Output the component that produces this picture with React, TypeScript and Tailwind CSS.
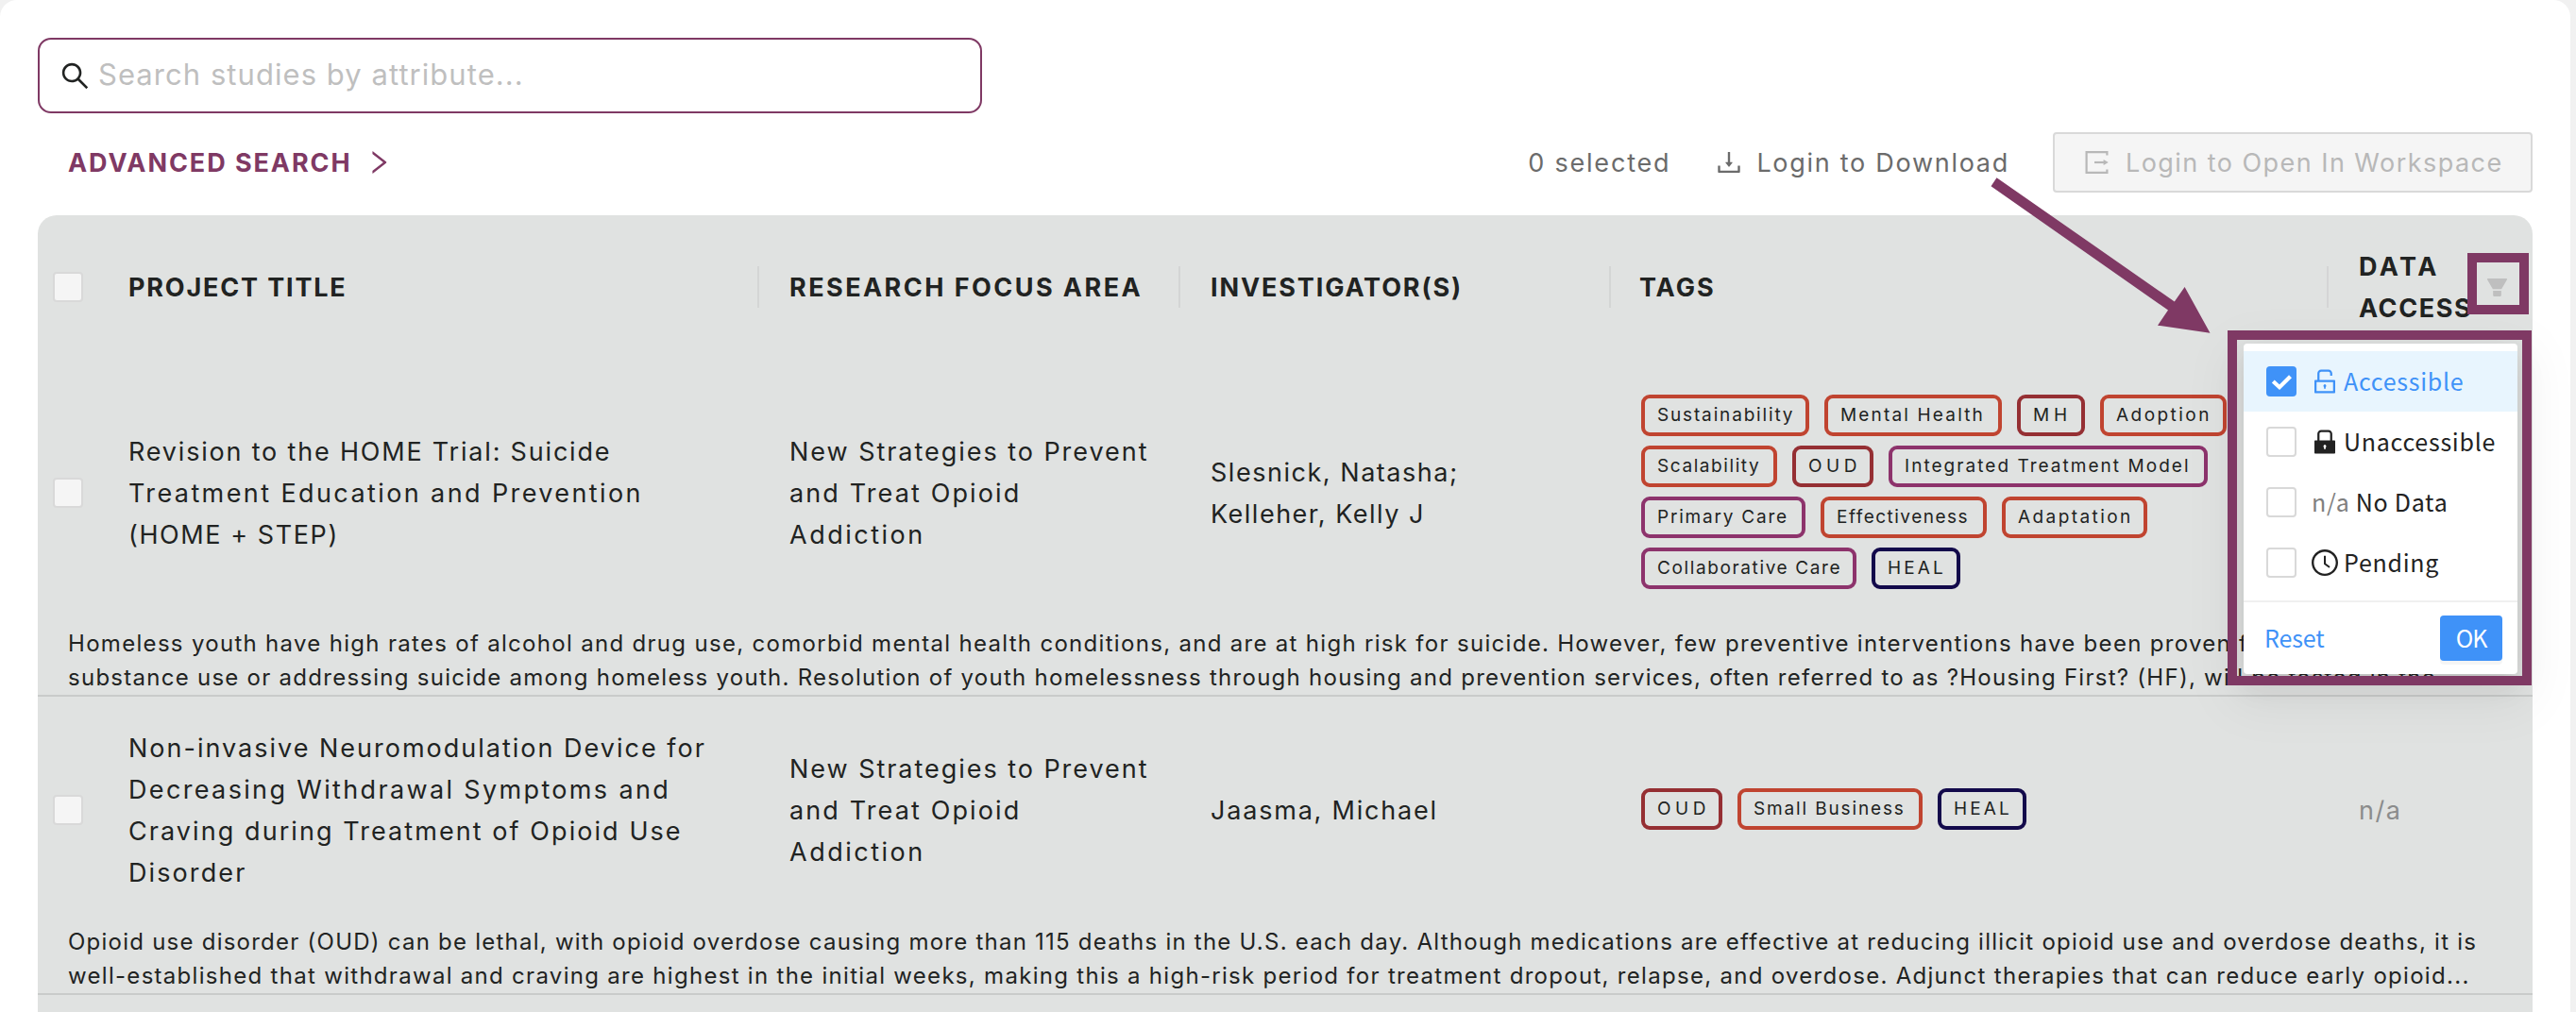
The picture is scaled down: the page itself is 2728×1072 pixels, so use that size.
import type { ReactNode } from "react";
import {
  AiFillFilter,
  AiFillLock,
  AiOutlineClockCircle,
  AiOutlineDownload,
  AiOutlineRight,
  AiOutlineSearch,
  AiOutlineUnlock,
} from "react-icons/ai";

/* A line of text: [content, letter-spacing class] */
type Line = [string, string];

interface Tag {
  label: string;
  box: string;
  color: string;
}

interface Study {
  height: string;
  title: Line[];
  area: Line[];
  investigators: Line[];
  tags: Tag[][];
  access: string;
  summaryPad: string;
  summary: Line[];
}

const ORANGE = "border-[#c04430]";
const RED = "border-[#952f33]";
const PURPLE = "border-[#8d336c]";
const NAVY = "border-[#130a4b]";

const AREA: Line[] = [
  ["New Strategies to Prevent", "tracking-[1.96px]"],
  ["and Treat Opioid", "tracking-[2.12px]"],
  ["Addiction", "tracking-[2.5px]"],
];

const STUDIES: Study[] = [
  {
    height: "h-[284px]",
    title: [
      ["Revision to the HOME Trial: Suicide", "tracking-[1.81px]"],
      ["Treatment Education and Prevention", "tracking-[2.4px]"],
      ["(HOME + STEP)", "tracking-[1.58px]"],
    ],
    area: AREA,
    investigators: [
      ["Slesnick, Natasha;", "tracking-[1.53px]"],
      ["Kelleher, Kelly J", "tracking-[1.5px]"],
    ],
    tags: [
      [
        { label: "Sustainability", box: "w-[178px] tracking-[1.84px]", color: ORANGE },
        { label: "Mental Health", box: "w-[188px] tracking-[2.17px]", color: ORANGE },
        { label: "MH", box: "w-[72px] tracking-[4.8px]", color: RED },
        { label: "Adoption", box: "w-[134px] tracking-[2.46px]", color: ORANGE },
      ],
      [
        { label: "Scalability", box: "w-[144px] tracking-[1.58px]", color: ORANGE },
        { label: "OUD", box: "w-[86px] tracking-[4.5px]", color: RED },
        { label: "Integrated Treatment Model", box: "w-[338px] tracking-[2.04px]", color: PURPLE },
      ],
      [
        { label: "Primary Care", box: "w-[174px] tracking-[1.79px]", color: PURPLE },
        { label: "Effectiveness", box: "w-[176px] tracking-[1.49px]", color: ORANGE },
        { label: "Adaptation", box: "w-[154px] tracking-[2.42px]", color: ORANGE },
      ],
      [
        { label: "Collaborative Care", box: "w-[228px] tracking-[1.62px]", color: PURPLE },
        { label: "HEAL", box: "w-[94px] tracking-[3.1px]", color: NAVY },
      ],
    ],
    access: "",
    summaryPad: "",
    summary: [
      [
        "Homeless youth have high rates of alcohol and drug use, comorbid mental health conditions, and are at high risk for suicide. However, few preventive interventions have been proven for",
        "tracking-[1.305px]",
      ],
      [
        "substance use or addressing suicide among homeless youth. Resolution of youth homelessness through housing and prevention services, often referred to as ?Housing First? (HF), will be tested in the...",
        "tracking-[1.265px]",
      ],
    ],
  },
  {
    height: "h-[240px]",
    title: [
      ["Non-invasive Neuromodulation Device for", "tracking-[2px]"],
      ["Decreasing Withdrawal Symptoms and", "tracking-[2.35px]"],
      ["Craving during Treatment of Opioid Use", "tracking-[2.07px]"],
      ["Disorder", "tracking-[2.1px]"],
    ],
    area: AREA,
    investigators: [["Jaasma, Michael", "tracking-[1.8px]"]],
    tags: [
      [
        { label: "OUD", box: "w-[86px] tracking-[4.5px]", color: RED },
        { label: "Small Business", box: "w-[196px] tracking-[1.86px]", color: ORANGE },
        { label: "HEAL", box: "w-[94px] tracking-[3.1px]", color: NAVY },
      ],
    ],
    access: "n/a",
    summaryPad: "pt-[2px]",
    summary: [
      [
        "Opioid use disorder (OUD) can be lethal, with opioid overdose causing more than 115 deaths in the U.S. each day. Although medications are effective at reducing illicit opioid use and overdose deaths, it is",
        "tracking-[1.238px]",
      ],
      [
        "well-established that withdrawal and craving are highest in the initial weeks, making this a high-risk period for treatment dropout, relapse, and overdose. Adjunct therapies that can reduce early opioid...",
        "tracking-[1.295px]",
      ],
    ],
  },
];

const COLUMNS = "grid grid-cols-[64px_700px_446px_456px_760px_216px]";

function Lines({ lines }: { lines: Line[] }) {
  return (
    <div>
      {lines.map(([text, tracking]) => (
        <div key={text} className={`whitespace-nowrap ${tracking}`}>
          {text}
        </div>
      ))}
    </div>
  );
}

function RowCheckbox() {
  return (
    <div className="ml-4 size-8 rounded-[4px] border-2 border-[#d9d9d9] bg-[#f5f5f5]" />
  );
}

function HeadCell({ lines, divider = true }: { lines: Line[]; divider?: boolean }) {
  return (
    <div className="flex items-center justify-between pl-8 font-bold">
      <div className="pt-[2px]">
        <Lines lines={lines} />
      </div>
      {divider && <div className="h-11 w-[2px] bg-[#d4d5d5]" />}
    </div>
  );
}

function TagPill({ label, box, color }: Tag) {
  return (
    <span
      className={`h-11 shrink-0 rounded-[9px] border-4 pl-[13px] text-[19px] leading-[35px] whitespace-nowrap ${box} ${color}`}
    >
      {label}
    </span>
  );
}

function StudyRow({ study }: { study: Study }) {
  return (
    <div className="border-b-2 border-[#c9cbca]">
      <div className={`${COLUMNS} ${study.height} items-center`}>
        <RowCheckbox />
        <div className="pt-[2px] pl-8">
          <Lines lines={study.title} />
        </div>
        <div className="pt-[2px] pl-8">
          <Lines lines={study.area} />
        </div>
        <div className="pt-[2px] pl-8">
          <Lines lines={study.investigators} />
        </div>
        <div className="flex flex-col gap-[10px] pb-[2px] pl-8">
          {study.tags.map((row, i) => (
            <div key={i} className="flex gap-4">
              {row.map((tag) => (
                <TagPill key={tag.label} {...tag} />
              ))}
            </div>
          ))}
        </div>
        <div className="pt-[2px] pl-8 tracking-[1.5px] text-[#8b8c8c]">{study.access}</div>
      </div>
      <div className={`pl-8 text-[24px] leading-9 ${study.summaryPad}`}>
        <Lines lines={study.summary} />
      </div>
    </div>
  );
}

function ExportIcon() {
  return (
    <svg viewBox="0 0 28 28" className="size-7" fill="none" stroke="currentColor" strokeWidth="2.2">
      <path d="M25.4 6.6 V3.1 H3.6 V24.9 H25.4 V21.4" />
      <path d="M12 14 H23" />
      <path d="M21.6 11 L26.8 14 L21.6 17 Z" fill="currentColor" stroke="none" />
    </svg>
  );
}

function FilterOption({ checked = false, children }: { checked?: boolean; children: ReactNode }) {
  return (
    <div
      className={
        checked
          ? "flex h-16 items-center bg-[#e8f5fe] pl-6 text-[#3f92f8]"
          : "flex h-16 items-center pl-6 text-[#222]"
      }
    >
      {checked ? (
        <div className="flex size-8 items-center justify-center rounded-[4px] bg-[#3f92f8]">
          <svg viewBox="0 0 32 32" className="size-8" fill="none" stroke="#fff" strokeWidth="4.2">
            <path d="M7.3 16 L14 22.2 L25.5 10.8" />
          </svg>
        </div>
      ) : (
        <div className="size-8 rounded-[4px] border-2 border-[#d9d9d9] bg-white" />
      )}
      <div className="flex items-center pl-[14px]">{children}</div>
    </div>
  );
}

function FilterMenu() {
  return (
    <div className="absolute top-[364px] left-[2376px] h-[350px] w-[290px] rounded-[4px] bg-white pt-2 font-['Noto_Sans_CJK_SC',sans-serif] text-[25px] leading-[44px] tracking-[0.74px] shadow-[0_6px_12px_-8px_rgba(0,0,0,0.12),0_12px_32px_rgba(0,0,0,0.08),0_18px_56px_16px_rgba(0,0,0,0.05)]">
      <FilterOption checked>
        <AiOutlineUnlock className="size-8" />
        <span className="pb-[2px] pl-[4px]">Accessible</span>
      </FilterOption>
      <FilterOption>
        <AiFillLock className="size-8" />
        <span className="pb-[2px] pl-[4px]">Unaccessible</span>
      </FilterOption>
      <FilterOption>
        <span className="pb-[2px] pl-[2px] text-[#808080]">n/a</span>
        <span className="pb-[2px] pl-[6px]">No Data</span>
      </FilterOption>
      <FilterOption>
        <AiOutlineClockCircle className="size-8" />
        <span className="pb-[2px] pl-[4px]">Pending</span>
      </FilterOption>
      <div className="mt-2 flex items-center justify-between border-t-2 border-[#f0f0f0] pt-[14px] pr-4 pl-[22px]">
        <span className="pb-[2px] tracking-[-0.1px] text-[#3f92f8]">Reset</span>
        <span className="flex h-12 w-[66px] items-center justify-center rounded-[4px] bg-[#3f92f8] pb-[2px] tracking-[-1px] text-white shadow-[0_4px_0_rgba(0,0,0,0.04)]">
          OK
        </span>
      </div>
    </div>
  );
}

function Annotations() {
  return (
    <>
      <div className="absolute top-[268px] left-[2613px] h-[65px] w-[65px] border-[10px] border-[#7f3964]" />
      <div className="absolute top-[350px] left-[2359px] h-[376px] w-[322px] border-[10px] border-[#7f3964]" />
      <svg
        className="absolute top-[180px] left-[2100px]"
        width="250"
        height="180"
        viewBox="2100 180 250 180"
        fill="#7f3964"
      >
        <path d="M2114.5 188.2 L2302.8 319.5 L2313.6 304 L2340.5 352.8 L2285 344.7 L2296 328.5 L2108.5 197.3 Z" />
      </svg>
    </>
  );
}

export default function App() {
  return (
    <div className="relative h-[1072px] w-[2728px] overflow-hidden bg-[#f1f1f1] font-[Inter,sans-serif] text-[27px] leading-[44px] text-[#212322]">
      <div className="h-full w-[2722px] rounded-t-[18px] bg-white px-10 pt-10">
        <div className="flex h-20 w-[1000px] items-center rounded-[14px] border-2 border-[#7f3964] pl-[20px]">
          <AiOutlineSearch className="size-[35px] text-[#212322]" />
          <span className="pb-[2px] pl-[7px] text-[31px] tracking-[1.05px] text-[#bfbfbf]">
            Search studies by attribute...
          </span>
        </div>

        <div className="mt-5 flex h-16 items-center justify-between">
          <div className="flex items-center pl-8 text-[#7f3964]">
            <span className="pt-[2px] font-bold tracking-[1.92px]">ADVANCED SEARCH</span>
            <AiOutlineRight className="ml-[12px] size-8" />
          </div>
          <div className="flex items-center text-[#6b6b6b]">
            <span className="mr-[46px] pt-[2px] tracking-[1.8px]">0 selected</span>
            <AiOutlineDownload className="size-8" />
            <span className="pt-[2px] pl-[13px] tracking-[1.72px]">Login to Download</span>
            <div className="ml-[46px] flex h-16 w-[508px] items-center rounded-[4px] border-2 border-[#d9d9d9] bg-[#f5f5f5] pl-[30px] text-[#b8b8b8]">
              <ExportIcon />
              <span className="pt-[2px] pl-[17px] tracking-[1.45px]">
                Login to Open In Workspace
              </span>
            </div>
          </div>
        </div>

        <div className="mt-6 h-[900px] w-[2642px] rounded-t-[20px] bg-[#e0e2e1]">
          <div className={`${COLUMNS} h-[152px] items-center`}>
            <RowCheckbox />
            <HeadCell lines={[["PROJECT TITLE", "tracking-[1.82px]"]]} />
            <HeadCell lines={[["RESEARCH FOCUS AREA", "tracking-[2.45px]"]]} />
            <HeadCell lines={[["INVESTIGATOR(S)", "tracking-[1.88px]"]]} />
            <HeadCell lines={[["TAGS", "-ml-[2px] tracking-[2px]"]]} />
            <div className="flex items-center">
              <HeadCell
                divider={false}
                lines={[
                  ["DATA", "tracking-[3.5px]"],
                  ["ACCESS", "tracking-[1.6px]"],
                ]}
              />
              <AiFillFilter className="ml-[13px] size-[27px] text-[#bfbfbf]" />
            </div>
          </div>
          {STUDIES.map((study) => (
            <StudyRow key={study.title[0][0]} study={study} />
          ))}
        </div>
      </div>
      <FilterMenu />
      <Annotations />
    </div>
  );
}
